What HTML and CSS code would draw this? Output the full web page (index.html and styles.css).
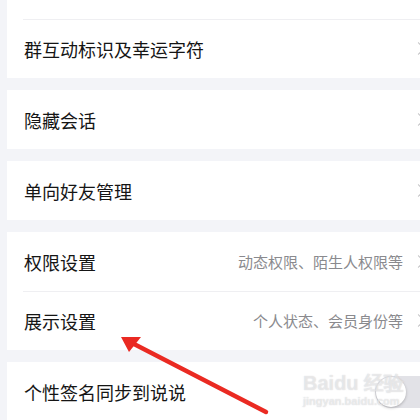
FILE: index.html
```html
<!doctype html>
<html>
<head>
<meta charset="utf-8">
<title>设置</title>
<link rel="stylesheet" href="styles.css">
</head>
<body>
<div class="page">
    <div class="group first">
        <div class="row"><span class="label">群聊助手</span></div>
        <div class="row"><span class="label">群互动标识及幸运字符</span><span class="chev"></span></div>
    </div>
    <div class="group">
        <div class="row"><span class="label">隐藏会话</span><span class="chev"></span></div>
    </div>
    <div class="group">
        <div class="row"><span class="label">单向好友管理</span><span class="chev"></span></div>
    </div>
    <div class="group">
        <div class="row"><span class="label">权限设置</span><span class="hint">动态权限、陌生人权限等</span><span class="chev"></span></div>
        <div class="row"><span class="label">展示设置</span><span class="hint">个人状态、会员身份等</span><span class="chev"></span></div>
    </div>
    <div class="group">
        <div class="row"><span class="label">个性签名同步到说说</span><span class="toggle"><span class="knob"></span></span></div>
    </div>
</div>
<div class="mark">
    <div class="mark-top">Bai<span class="paw">du</span> 经验</div>
    <div class="mark-url">jingyan.baidu.com</div>
</div>
<svg class="arrow" width="420" height="420" viewBox="0 0 420 420">
    <line x1="134" y1="344" x2="266" y2="412" stroke="#ea2a22" stroke-width="4.5" stroke-linecap="round"/>
    <polygon points="121,337 141,337 129,352" fill="#ea2a22"/>
</svg>
</body>
</html>
```
FILE: styles.css
```css
body {
	margin: 0;
	background: #f3f4f8;
	font-family: "Noto Sans CJK SC", "Noto Sans", sans-serif;
	overflow: hidden;
}
.page {
	width: 420px;
	height: 420px;
	padding-left: 7px;
	box-sizing: border-box;
	display: flex;
	flex-direction: column;
	gap: 12px;
	overflow: hidden;
}
.group {
	background: #fff;
	flex-shrink: 0;
}
.group.first {
	margin-top: -40px;
}
.row {
	height: 59px;
	display: flex;
	align-items: center;
	padding-left: 17px;
	position: relative;
}
.row + .row:before {
	content: "";
	position: absolute;
	left: 16px;
	right: 0;
	top: 0;
	border-top: 1px solid #efeff2;
}
.label {
	flex: 1;
	font-size: 18px;
	color: #151515;
	white-space: nowrap;
}
.hint {
	font-size: 15px;
	color: #8a8a8e;
	margin-right: 11px;
	white-space: nowrap;
}
.chev {
	width: 8px;
	height: 8px;
	border-top: 1.5px solid #b5b5b8;
	border-right: 1.5px solid #b5b5b8;
	transform: rotate(45deg);
	margin-right: -3px;
	flex-shrink: 0;
}
.toggle {
	width: 60px;
	height: 32px;
	border-radius: 16px;
	background: #e2e2e7;
	margin-right: -15px;
	display: flex;
	align-items: center;
	flex-shrink: 0;
}
.knob {
	width: 30px;
	height: 30px;
	border-radius: 50%;
	background: #fff;
	margin-left: 1px;
	box-shadow: 0 1px 3px rgba(0, 0, 0, 0.25);
}
.mark {
	position: absolute;
	left: 303px;
	top: 372px;
	color: rgba(255, 255, 255, 0.5);
	text-shadow: 0 0 1px rgba(170, 170, 175, 0.6);
	font-family: "Liberation Sans", sans-serif;
	font-weight: bold;
}
.mark-top {
	font-size: 20px;
	line-height: 22px;
}
.mark-url {
	font-size: 11px;
	line-height: 14px;
}
.arrow {
	position: absolute;
	left: 0;
	top: 0;
}
```
